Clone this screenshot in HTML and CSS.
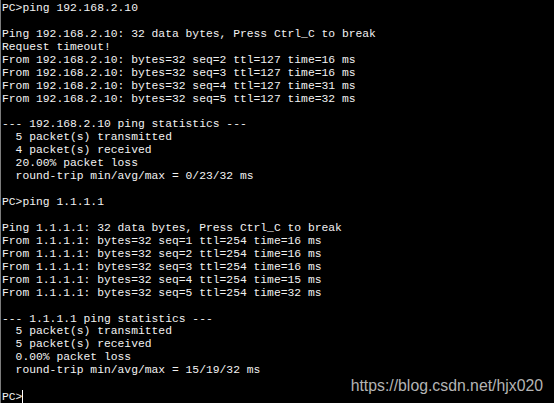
FILE: index.html
```html
<!DOCTYPE html>
<html>
<head>
<meta charset="utf-8">
<link rel="stylesheet" href="styles.css">
</head>
<body>
<div class="console">
<pre class="term">PC&gt;ping 192.168.2.10

Ping 192.168.2.10: 32 data bytes, Press Ctrl_C to break
Request timeout!
From 192.168.2.10: bytes=32 seq=2 ttl=127 time=16 ms
From 192.168.2.10: bytes=32 seq=3 ttl=127 time=16 ms
From 192.168.2.10: bytes=32 seq=4 ttl=127 time=31 ms
From 192.168.2.10: bytes=32 seq=5 ttl=127 time=32 ms

--- 192.168.2.10 ping statistics ---
  5 packet(s) transmitted
  4 packet(s) received
  20.00% packet loss
  round-trip min/avg/max = 0/23/32 ms

PC&gt;ping 1.1.1.1

Ping 1.1.1.1: 32 data bytes, Press Ctrl_C to break
From 1.1.1.1: bytes=32 seq=1 ttl=254 time=16 ms
From 1.1.1.1: bytes=32 seq=2 ttl=254 time=16 ms
From 1.1.1.1: bytes=32 seq=3 ttl=254 time=16 ms
From 1.1.1.1: bytes=32 seq=4 ttl=254 time=15 ms
From 1.1.1.1: bytes=32 seq=5 ttl=254 time=32 ms

--- 1.1.1.1 ping statistics ---
  5 packet(s) transmitted
  5 packet(s) received
  0.00% packet loss
  round-trip min/avg/max = 15/19/32 ms

PC&gt;<span class="caret"></span></pre>
<div class="watermark">https://blog.csdn.net/hjx020</div>
</div>
</body>
</html>
```

FILE: styles.css
```css
html, body {
  margin: 0;
  padding: 0;
  background: #000;
  height: 100%;
  overflow: hidden;
}
.console {
  position: relative;
  height: 403px;
  border-left: 1px solid #7c7c7c;
  box-sizing: border-box;
  background: #000;
}
.term {
  margin: 0;
  padding: 2px 0 0 1px;
  font-family: "Liberation Mono", "Courier New", monospace;
  font-size: 11.33px;
  line-height: 12.93px;
  color: #f2f2f2;
  white-space: pre;
}
.caret {
  display: inline-block;
  width: 1px;
  height: 13px;
  background: #fff;
  vertical-align: -3px;
}
.watermark {
  position: absolute;
  right: 11px;
  bottom: 8px;
  font-family: "Liberation Sans", Arial, sans-serif;
  font-size: 15.8px;
  color: #b4b4b4;
}
```
